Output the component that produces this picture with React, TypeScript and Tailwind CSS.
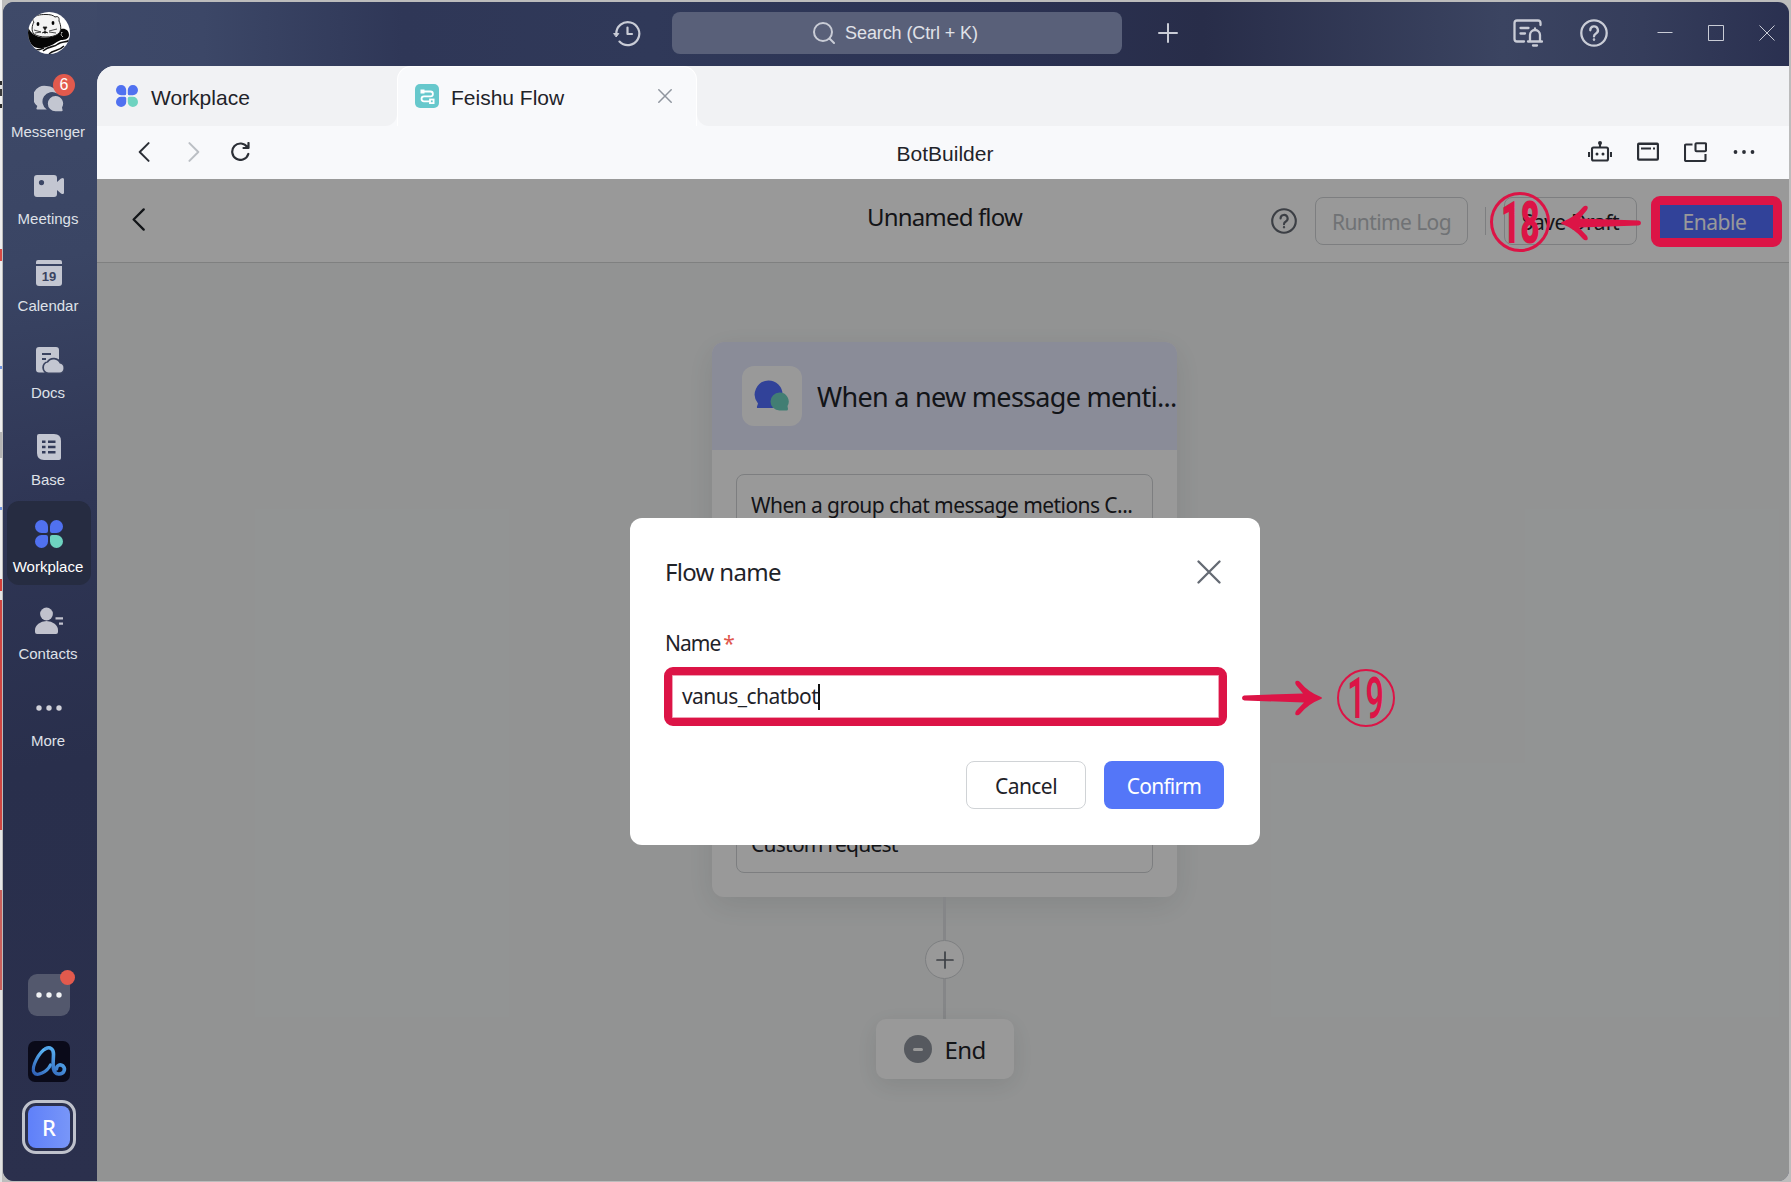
import React from "react";

const edgeSegments: [number, string][] = [
  [81, "#f1f1f1"], [4, "#2b2b2b"], [4, "#e3e3e3"], [7, "#3a3a3a"], [8, "#f1f1f1"], [4, "#2b2b2b"], [141, "#eeeeee"],
  [12, "#d94a45"], [105, "#eeeeee"], [3, "#6f93e0"], [63, "#eeeeee"], [26, "#b5b5b5"], [49, "#eeeeee"], [3, "#6f93e0"],
  [69, "#eeeeee"], [12, "#d33f3a"], [9, "#e5e5e5"], [230, "#cf4642"], [60, "#e6e6e6"], [100, "#c9605c"], [192, "#e2e2e2"],
];

function Otter() {
  return (
    <svg className="h-[42px] w-[42px]" viewBox="0 0 42 42">
      <defs><clipPath id="avatar"><circle cx="21" cy="21" r="21" /></clipPath></defs>
      <g clipPath="url(#avatar)">
        <rect width="42" height="42" fill="#fff" />
        <path d="M0 15 C3 22 8 25 16 25.500 C25 26 31 22 33 17 C37 16 41 18 41 23 C41 27 37 28 33 28 C27 30 24 35 14 36 C7 37 2 33 0 27Z" fill="#050505" />
        <path d="M5 7 C7 3 12 2.500 18 2.500 C22 2.500 25 3 27 5 C30 4 31.500 5 31 9 C33 13 34 19 30 22 C25 26 11 26 6 22 C3 19 4 13 6 10 C5 9 4.500 8 5 7Z" fill="#f3f3f3" stroke="#222" strokeWidth="1" />
        <ellipse cx="10" cy="12" rx="1.400" ry="2.100" /><ellipse cx="25" cy="11" rx="1.400" ry="2.100" />
        <path d="M15 15h4l-2 3zM17 18v4M14 21q3-3 6 0M6 18l7 2M7 21l6-1M21 19l8-2M21 20l7 1" fill="#111" stroke="#222" strokeWidth=".8" />
        <path d="M34 20l-1 3 2 2" stroke="#fff" fill="none" strokeDasharray="1.500 1" />
        <path d="M15 39 C22 33 25 36 30 32 C34 29 37 31 42 28 M21 42 C26 37 30 40 36 34 M7 38q5 0 9-2" fill="none" stroke="#111" strokeWidth="1.600" />
      </g>
    </svg>
  );
}

function Clover({ className }: { className: string }) {
  return (
    <svg className={className} viewBox="0 0 28 28">
      <path d="M6.500 0A6.500 6.500 0 0 1 13 6.500V11a2 2 0 0 1-2 2H6.500A6.500 6.500 0 0 1 6.500 0Z" fill="#5071f0" />
      <path d="M21.500 0A6.500 6.500 0 0 0 15 6.500V11a2 2 0 0 0 2 2h4.500A6.500 6.500 0 0 0 21.500 0Z" fill="#5071f0" />
      <path d="M6.500 28A6.500 6.500 0 0 0 13 21.500V17a2 2 0 0 0-2-2H6.500A6.500 6.500 0 0 0 6.500 28Z" fill="#5071f0" />
      <path d="M21.500 28A6.500 6.500 0 0 1 15 21.500V17a2 2 0 0 1 2-2h4.500A6.500 6.500 0 0 1 21.500 28Z" fill="#6ed3c0" />
    </svg>
  );
}

const fill = "#c3c6d1";
const icons: Record<string, React.ReactNode> = {
  Messenger: (
    <svg className="h-[30px] w-[30px]" viewBox="0 0 30 30" fill={fill}>
      <path d="M12.500 2A11.300 11.300 0 0 1 23.300 9.500A9 9 0 0 0 12.800 25.500H3.500q-1.500 0-1-1.200l.8-2.300A11.300 11.300 0 0 1 12.500 2Z" />
      <path d="M21.500 12a7.600 7.600 0 0 1 6.500 11.500l.6 2.800q.2 1-1 1H21.500a7.600 7.600 0 0 1 0-15.300Z" />
    </svg>
  ),
  Meetings: (
    <svg className="h-[30px] w-[30px]" viewBox="0 0 30 30" fill={fill}>
      <path fillRule="evenodd" d="M3 4H20a3 3 0 0 1 3 3v4l4-3.500q3-1.500 3 1v13q0 2.500-3 1l-4-3.500v4a3 3 0 0 1-3 3H3a3 3 0 0 1-3-3V7a3 3 0 0 1 3-3ZM7.500 9a2.600 2.600 0 1 0 0 5.200a2.600 2.600 0 0 0 0-5.200Z" />
    </svg>
  ),
  Calendar: (
    <span className="flex h-[26px] w-[26px] flex-col gap-[2px]">
      <span className="h-1 rounded-t-[2px] bg-[#c3c6d1]" />
      <span className="flex h-5 items-center justify-center rounded-b-[3px] bg-[#c3c6d1] font-['Liberation_Sans'] text-[13px] font-bold leading-none text-[#3a4360]">19</span>
    </span>
  ),
  Docs: (
    <svg className="h-[28px] w-[30px]" viewBox="0 0 30 28">
      <path d="M5 1H22a3 3 0 0 1 3 3V26.500H5a3 3 0 0 1-3-3V4a3 3 0 0 1 3-3Z" fill={fill} />
      <path d="M8 8h9M8 13h4" stroke="#3a4360" strokeWidth="2.200" />
      <path d="M14.500 26.500a5 5 0 0 1-.4-9.900a6.500 6.500 0 0 1 11.600 1a4.500 4.500 0 0 1-.2 8.900Z" fill={fill} stroke="#3a4360" strokeWidth="3.500" />
      <path d="M14.500 26.500a5 5 0 0 1-.4-9.900a6.500 6.500 0 0 1 11.600 1a4.500 4.500 0 0 1-.2 8.900Z" fill={fill} />
    </svg>
  ),
  Base: (
    <svg className="h-[28px] w-[26px]" viewBox="0 0 26 28">
      <path d="M3 1H18q7 0 7 7V25q0 2-2 2H8q-7 0-7-7V3q0-2 2-2Z" fill={fill} />
      <path d="M6 8.800h3.500M6 14h3.500M6 19.200h3.500M12 8.800h7.500M12 14h7.500M12 19.200h7.500" stroke="#343c5a" strokeWidth="2.400" />
    </svg>
  ),
  Workplace: <Clover className="h-[28px] w-[28px]" />,
  Contacts: (
    <svg className="h-[28px] w-[30px]" viewBox="0 0 30 28" fill="#c1c2cd">
      <circle cx="12.500" cy="7" r="6.400" />
      <path d="M1 25v-2a11.500 9 0 0 1 23 0v2q0 2-2 2H3q-2 0-2-2Z" />
      <path d="M21.500 10.200h7.500v2.200h-7.500zM25 15.500h4v2.200h-4z" />
    </svg>
  ),
  More: (
    <svg className="h-[28px] w-[28px]" viewBox="0 0 28 28" fill="#d0d1d9">
      <circle cx="4" cy="14" r="2.700" /><circle cx="14" cy="14" r="2.700" /><circle cx="24" cy="14" r="2.700" />
    </svg>
  ),
};

function SideItem({ name, badge, active }: { name: string; badge?: string; active?: boolean }) {
  return (
    <div className={active ? "mb-[3px] flex h-[84px] w-[84px] flex-col items-center rounded-xl bg-[#262c41]" : "mb-[3px] flex h-[84px] w-[84px] flex-col items-center"}>
      <div className="relative mt-[17px] flex h-8 items-center justify-center">
        {icons[name]}
        {badge && <span className="absolute -top-[9px] left-[19px] flex h-[22px] w-[22px] items-center justify-center rounded-full bg-[#e25a4d] text-[16px] text-white">{badge}</span>}
      </div>
      <span className={active ? "mr-[2px] mt-[8px] text-[15px] leading-[18px] text-white" : "mr-[2px] mt-[8px] text-[15px] leading-[18px] text-[#dfe1e8]"}>{name}</span>
    </div>
  );
}

function Chevron({ className, flip }: { className: string; flip?: boolean }) {
  return (
    <svg className={className} viewBox="0 0 12 21" fill="none" stroke="currentColor" strokeWidth="2.100" strokeLinecap="round" strokeLinejoin="round">
      <path d={flip ? "M1.200 1.200L10.500 10.500L1.200 19.800" : "M10.800 1.200L1.500 10.500L10.800 19.800"} />
    </svg>
  );
}

function Help({ className }: { className: string }) {
  return (
    <svg className={className} viewBox="0 0 28 28" fill="none" stroke="currentColor" strokeWidth="2.300" strokeLinecap="round">
      <circle cx="14" cy="14" r="12.700" />
      <path d="M10.300 11.300a3.800 3.800 0 1 1 5.700 3.200q-2 1.200-2 2.900" />
      <circle cx="14" cy="20.600" r=".5" fill="currentColor" strokeWidth="1.600" />
    </svg>
  );
}

function Arrow({ className }: { className: string }) {
  return (
    <svg className={className} viewBox="0 0 80 36" fill="#dc1446">
      <path d="M2 15.500L61 13.500L54 5Q52.500 2 54 1Q56 0 58 2Q66 12 79 17Q81 18 79 19Q66 24 58 34Q56 36 54 35Q52.500 34 54 31L62 22.500L2.500 20.500Q0 20 0 18Q0 16 2 15.500Z" />
    </svg>
  );
}

function TitleBar() {
  return (
    <header className="flex h-16 shrink-0 items-center pb-[2px] text-[#c9ccd6]">
      <svg className="ml-[516px] h-[27px] w-[28px]" viewBox="0 0 28 27" fill="none" stroke="currentColor" strokeWidth="2.200" strokeLinecap="round" strokeLinejoin="round">
        <path d="M3.300 14A11.500 11.500 0 1 1 6.500 21.600" /><path d="M1 13.500h4.800l-2.400 3.200z" fill="currentColor" strokeWidth="1" /><path d="M14.500 7.500v6.500h4.500" />
      </svg>
      <div className="ml-[31px] flex h-[42px] w-[450px] items-center justify-center rounded-lg bg-[#596079] pr-[3px]">
        <svg className="mr-2.5 h-[22px] w-[22px]" viewBox="0 0 22 22" fill="none" stroke="currentColor" strokeWidth="2" strokeLinecap="round"><circle cx="10" cy="10" r="9" /><path d="M16.500 16.500l4.500 4.500" /></svg>
        <span className="text-[18px] tracking-[-0.1px] text-[#e0e2e8]">Search (Ctrl + K)</span>
      </div>
      <svg className="ml-[36px] h-[20px] w-[20px]" viewBox="0 0 20 20" stroke="currentColor" strokeWidth="2" strokeLinecap="round"><path d="M1 10h18M10 1v18" /></svg>
      <svg className="ml-auto h-[28px] w-[30px]" viewBox="0 0 30 28" fill="none" stroke="currentColor" strokeWidth="2.300" strokeLinecap="round" strokeLinejoin="round">
        <path d="M27.500 6V4q0-2.500-2.500-2.500H4Q1.500 1.500 1.500 4V20q0 2.500 2.500 2.500H11" /><path d="M7.500 9h8M7.500 14.500h4.500" />
        <path d="M15 22.500h14M17 22.500V16a5 5 0 0 1 10 0v6.500M22 9.500v1M20 26.500h4" />
      </svg>
      <Help className="ml-[37px] h-[28px] w-[28px]" />
      <svg className="ml-[49px] h-[16px] w-[16px]" viewBox="0 0 16 16" stroke="currentColor"><path d="M.5 7.500h15" /></svg>
      <svg className="ml-[35px] h-[16px] w-[16px]" viewBox="0 0 16 16" fill="none" stroke="currentColor"><path d="M.5.500h15v15H.500z" /></svg>
      <svg className="ml-[35px] mr-[14px] h-[16px] w-[16px]" viewBox="0 0 16 16" stroke="currentColor"><path d="M.5.500l15 15M15.500.500l-15 15" /></svg>
    </header>
  );
}

function TabBar() {
  return (
    <div className="flex h-[60px] shrink-0 bg-[#f8f9fb] text-[21px] text-[#1f2329]">
      <div className="flex w-[300px] items-center rounded-br-[12px] bg-[#f1f2f4] pl-[19px]">
        <Clover className="h-[22px] w-[22px]" />
        <span className="ml-[13px] mt-1">Workplace</span>
      </div>
      <div className="flex w-[300px] bg-[#f1f2f4]">
        <div className="flex w-full items-center rounded-t-[14px] border-x border-t border-white bg-[#f8f9fb] pl-[17px]">
          <svg className="mb-px h-6 w-6" viewBox="0 0 24 24" fill="none" stroke="#fff" strokeWidth="1.800">
            <rect width="24" height="24" rx="5" fill="#67c8cc" stroke="none" />
            <rect x="5.500" y="5.500" width="4" height="4" fill="#fff" stroke="none" />
            <path d="M9 7.500h6.500a2.300 2.300 0 0 1 0 4.800H9a2.500 2.500 0 0 0 0 5h6" /><rect x="15" y="15.500" width="3.600" height="3.600" />
          </svg>
          <span className="ml-[12px] mt-[3px]">Feishu Flow</span>
          <svg className="mb-[2px] ml-auto mr-[24px] h-[14px] w-[14px]" viewBox="0 0 14 14" stroke="#8f959e" strokeWidth="1.500" strokeLinecap="round"><path d="M.8.800l12.400 12.400M13.200.800L.8 13.200" /></svg>
        </div>
      </div>
      <div className="flex-1 rounded-bl-[12px] bg-[#f1f2f4]" />
    </div>
  );
}

function ToolBar() {
  return (
    <div className="grid h-[53px] shrink-0 grid-cols-3 items-center bg-[#f8f9fb] text-[#2b2f36]">
      <div className="mb-[2px] flex items-center pl-[41px]">
        <Chevron className="h-[20px] w-[12px]" />
        <Chevron className="ml-[38px] h-[20px] w-[12px] text-[#bbbfc4]" flip />
        <svg className="ml-[31px] h-[19px] w-[19px]" viewBox="0 0 19 19" fill="none" stroke="currentColor" strokeWidth="2.200" strokeLinecap="round" strokeLinejoin="round"><path d="M17.300 12A8.200 8.200 0 1 1 16.300 5.200M17.500 1v5h-5" /></svg>
      </div>
      <span className="mt-[2px] pl-[4px] text-center text-[21px] text-[#1f2329]">BotBuilder</span>
      <div className="mb-[2px] flex items-center justify-end pr-[34px]">
        <svg className="h-[21px] w-[24px]" viewBox="0 0 24 21" fill="none" stroke="currentColor" strokeWidth="2.100"><rect x="4" y="6.500" width="16" height="13" rx="1.500" /><path d="M12 6V2M1 11v5M23 11v5" /><g fill="currentColor" stroke="none"><circle cx="12" cy="2" r="2" /><circle cx="9" cy="13" r="1.500" /><circle cx="15" cy="13" r="1.500" /></g></svg>
        <svg className="ml-[25px] h-[19px] w-[22px]" viewBox="0 0 22 19" fill="none" stroke="currentColor" strokeWidth="2.200"><rect x="1.100" y="1.600" width="19.800" height="16" rx=".8" /><path d="M1 2h20M4 6.500h10M16 6.500h2" strokeWidth="2" /></svg>
        <svg className="ml-[25px] h-[20px] w-[23px]" viewBox="0 0 23 20" fill="none" stroke="currentColor" strokeWidth="2.100"><path d="M8.500 2.500H2q-1 0-1 1V18q0 1 1 1H20.500q1 0 1-1V12" /><rect x="11.500" y="1.200" width="10.500" height="8" rx="1" /></svg>
        <svg className="ml-[26px] h-[4px] w-[22px]" viewBox="0 0 22 4" fill="currentColor"><circle cx="2.500" cy="2" r="1.900" /><circle cx="11" cy="2" r="1.900" /><circle cx="19.500" cy="2" r="1.900" /></svg>
      </div>
    </div>
  );
}

function FlowPage() {
  return (
    <div className="flex h-full flex-col bg-[#f4f6f6] text-[#1f2329]">
      <div className="grid h-[84px] shrink-0 grid-cols-3 border-b border-[#d4d5d6] bg-white">
        <Chevron className="ml-[35px] mt-[29px] h-[23px] w-[13px]" />
        <div className="mt-[23px] pl-[3px] text-center text-[24px] leading-[30px] tracking-[-0.85px]">Unnamed flow</div>
        <div className="mt-[18px] flex h-12 items-center justify-end whitespace-nowrap pr-[13px] text-[21px]">
          <Help className="h-[26px] w-[26px] shrink-0 text-[#646a73]" />
          <div className="ml-[18px] flex h-12 w-[153px] shrink-0 items-center justify-center rounded-lg border border-[#d0d3d6] pt-[3px] tracking-[-0.6px] text-[#bbbfc4]">Runtime Log</div>
          <div className="ml-[17px] h-7 w-px bg-[#d0d3d6]" />
          <div className="ml-[18px] flex h-12 w-[133px] shrink-0 items-center justify-center rounded-lg border border-[#d0d3d6] pt-[3px] tracking-[-0.4px]">Save Draft</div>
          <div className="ml-[20px] flex h-[38px] w-[119px] shrink-0 items-center justify-center bg-[#526eff] pr-[4px] pt-[3px] tracking-[-0.45px] text-white">Enable</div>
        </div>
      </div>
      <div className="flex flex-col items-center pl-[3px] pt-[79px]">
        <div className="flex h-[555px] w-[465px] flex-col rounded-xl bg-white shadow-[0_8px_30px_rgba(31,35,41,0.10)]">
          <div className="flex h-[108px] shrink-0 items-center rounded-t-xl bg-[#e6e9fd] pl-[30px]">
            <div className="flex h-[60px] w-[60px] shrink-0 items-center justify-center rounded-xl bg-white">
              <svg className="h-[36px] w-[36px]" viewBox="0 0 36 36"><path d="M14.500 2.500a14 14 0 0 1 14 14a14 14 0 0 1-10 13.500H4q-1.500 0-1-1.500l1-3A14 14 0 0 1 14.500 2.500Z" fill="#526eff" /><path d="M25.500 14.500a9 9 0 0 1 8 13.500l.5 3q0 1.500-1.500 1.500h-7a9 9 0 0 1 0-18Z" fill="#6ed3c0" /></svg>
            </div>
            <span className="ml-[15px] mt-[2px] whitespace-nowrap text-[27px] tracking-[-0.7px]">When a new message menti...</span>
          </div>
          <div className="m-6 flex flex-1 flex-col justify-between rounded-lg border border-[#d0d3d6] px-[14px] pb-[14px] pt-[16px] text-[21px] leading-7">
            <span className="whitespace-nowrap tracking-[-0.56px]">When a group chat message metions C...</span>
            <span className="tracking-[-0.75px]">Custom request</span>
          </div>
        </div>
        <div className="h-[43px] w-[3px] bg-[#dee0e3]" />
        <div className="flex h-[39px] w-[39px] items-center justify-center rounded-full border border-[#d0d3d6] bg-white">
          <svg className="h-[18px] w-[18px]" viewBox="0 0 18 18" stroke="#646a73" strokeWidth="1.700" strokeLinecap="round"><path d="M1 9h16M9 1v16" /></svg>
        </div>
        <div className="h-[40px] w-[3px] bg-[#dee0e3]" />
        <div className="flex h-[60px] w-[138px] items-center rounded-[10px] bg-white pl-[28px] shadow-[0_6px_24px_rgba(31,35,41,0.10)]">
          <span className="flex h-7 w-7 items-center justify-center rounded-full bg-[#8f959e]"><span className="h-[3px] w-[10px] rounded bg-white" /></span>
          <span className="ml-[13px] mt-[2px] text-[24px] tracking-[-0.6px]">End</span>
        </div>
      </div>
    </div>
  );
}

function FlowNameDialog() {
  return (
    <div className="flex h-[327px] w-[630px] flex-col rounded-xl bg-white px-9 text-[21px] text-[#1f2329]">
      <div className="mt-[36px] flex h-9 items-center justify-between">
        <span className="-ml-px text-[24px] tracking-[-0.7px]">Flow name</span>
        <svg className="mr-[3px] h-[24px] w-[24px]" viewBox="0 0 24 24" stroke="#646a73" strokeWidth="2.300" strokeLinecap="round"><path d="M1.500 1.500l21 21M22.500 1.500l-21 21" /></svg>
      </div>
      <div className="mt-[40px] flex h-7 items-center"><span className="-ml-px tracking-[-1px]">Name</span><span className="ml-[3px] text-[#e0574d]">*</span></div>
      <div className="-mx-[2px] mt-[9px] flex h-[59px] w-[563px] items-center rounded-[9px] border-[8px] border-[#dc1446] pl-[10px] shadow-[inset_0_0_0_1px_#f0a0b4]">
        <span className="tracking-[-0.55px]">vanus_chatbot</span><span className="h-[26px] w-[2px] bg-[#111]" />
      </div>
      <div className="mt-[35px] flex justify-end gap-[18px]">
        <div className="flex h-12 w-[120px] items-center justify-center rounded-lg border border-[#d0d3d6] pt-[3px] tracking-[-0.55px]">Cancel</div>
        <div className="flex h-12 w-[120px] items-center justify-center rounded-lg bg-[#5476f8] pt-[3px] tracking-[-0.8px] text-white">Confirm</div>
      </div>
    </div>
  );
}

function StepBadge({ label, bold }: { label: string; bold?: boolean }) {
  return (
    <div className={bold ? "flex h-[60px] w-[60px] items-center justify-center rounded-full border-[3.5px] border-[#dc1446]" : "flex h-[58px] w-[58px] items-center justify-center rounded-full border-2 border-[#dc1446]"}>
      <span className={bold ? "scale-x-[0.57] font-[Roboto] text-[59px] font-black leading-none text-[#dc1446]" : "mt-px scale-x-[0.56] font-[Roboto] text-[57px] font-semibold leading-none text-[#dc1446]"}>{label}</span>
    </div>
  );
}

export default function App() {
  return (
    <div className="flex h-[1182px] w-[1791px] overflow-hidden bg-[#bcbcbc] font-['Liberation_Sans',Arial,sans-serif]">
      <div className="flex w-[2px] shrink-0 flex-col">
        {edgeSegments.map(([h, c], i) => <div key={i} className="shrink-0" style={{ height: h, background: c }} />)}
      </div>
      <div className="ml-px mt-[2px] flex h-[1179px] w-[1786px] shrink-0 overflow-hidden rounded-[11px] bg-[linear-gradient(90deg,#3f4a69_0px,#3c4767_200px,#2f3757_400px,#303959_650px,#2b3253_1000px,#282d49_1200px,#3b4461_1500px,#353d5b_1640px,#2a3050_1786px)]">
        <aside className="flex w-[94px] shrink-0 flex-col items-center bg-[linear-gradient(170deg,#3f4a69_0px,#3a4564_260px,#2f3655_500px,#292f4c_760px,#2b304d_1179px)] pr-[2px]">
          <div className="mt-[10px] flex h-[54px] items-start"><Otter /></div>
          <SideItem name="Messenger" badge="6" />
          <SideItem name="Meetings" />
          <SideItem name="Calendar" />
          <SideItem name="Docs" />
          <SideItem name="Base" />
          <SideItem name="Workplace" active />
          <SideItem name="Contacts" />
          <SideItem name="More" />
          <div className="relative mt-auto flex h-[42px] w-[42px] items-center justify-center rounded-[9px] bg-[#53586d]">
            <svg className="h-[6px] w-[26px]" viewBox="0 0 26 6" fill="#f0f1f4"><circle cx="3" cy="3" r="2.700" /><circle cx="13" cy="3" r="2.700" /><circle cx="23" cy="3" r="2.700" /></svg>
            <span className="absolute -right-[5px] -top-[4px] h-[15px] w-[15px] rounded-full bg-[#e25a4d]" />
          </div>
          <svg className="mt-[25px] h-[41px] w-[42px]" viewBox="0 0 42 41">
            <defs><linearGradient id="brand" x1="0" y1="1" x2=".6" y2="0"><stop stopColor="#2f5fb5" /><stop offset="1" stopColor="#5bb8f8" /></linearGradient></defs>
            <rect width="42" height="41" rx="7" fill="#0a0a19" />
            <path d="M18 7.500C11 11 3 26 6 31.500C9 36 19 31 22.500 24" fill="none" stroke="url(#brand)" strokeWidth="3.200" strokeLinecap="round" />
            <path d="M18 7.500C22 5.500 25.500 8 25.500 13C25.500 21 23 32 30.500 33C36 33.500 38 28 35 25C32 22.500 28.500 24.500 28.500 28" fill="none" stroke="url(#brand)" strokeWidth="3.600" strokeLinecap="round" />
          </svg>
          <div className="mb-[27px] mt-[18px] flex h-[54px] w-[54px] items-center justify-center rounded-[14px] border-[3px] border-[#bfc2cc]">
            <div className="flex h-[42px] w-[42px] items-center justify-center rounded-[8px] bg-[linear-gradient(90deg,#5f80f9,#7896f8)] font-['Noto_Sans'] text-[22px] font-medium text-white">R</div>
          </div>
        </aside>
        <div className="flex w-[1692px] shrink-0 flex-col">
          <TitleBar />
          <div className="flex flex-1 flex-col overflow-hidden rounded-tl-[18px]">
            <TabBar />
            <ToolBar />
            <main className="relative flex-1 font-['Noto_Sans',sans-serif]">
              <FlowPage />
              <div className="absolute inset-0 flex bg-black/40">
                <div className="ml-[533px] mt-[339px]"><FlowNameDialog /></div>
              </div>
              <div className="absolute left-[1554px] top-[17px] h-[51px] w-[131px] rounded-[9px] border-[9px] border-[#dc1446]" />
              <div className="absolute left-[1393px] top-[13px]"><StepBadge label="18" bold /></div>
              <Arrow className="absolute left-[1464px] top-[26px] h-[36px] w-[80px] -scale-x-100" />
              <Arrow className="absolute left-[1145px] top-[501px] h-[36px] w-[80px]" />
              <div className="absolute left-[1240px] top-[490px]"><StepBadge label="19" /></div>
            </main>
          </div>
        </div>
      </div>
    </div>
  );
}
